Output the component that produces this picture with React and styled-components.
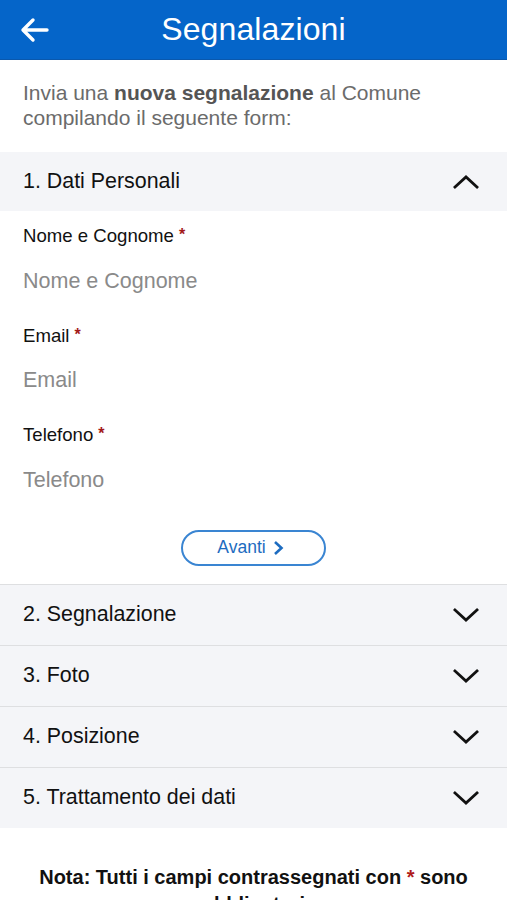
import React from 'react';
import styled, { createGlobalStyle } from 'styled-components';

const GlobalStyle = createGlobalStyle`
  html, body {
    margin: 0;
    padding: 0;
    background: #fff;
    font-family: "Liberation Sans", Arial, sans-serif;
  }
`;

const Page = styled.div`
  width: 507px;
  min-height: 900px;
  background: #fff;
  overflow: hidden;
`;

const Header = styled.header`
  height: 59px;
  background: #0565c9;
  border-bottom: 1px solid #0a58ad;
  display: flex;
  align-items: center;
  justify-content: center;
  position: relative;
`;

const BackButton = styled.button`
  position: absolute;
  left: 19px;
  top: 16px;
  width: 32px;
  height: 28px;
  padding: 0;
  border: none;
  background: none;
  display: flex;
  align-items: center;
  justify-content: center;
`;

const Title = styled.h1`
  margin: 0;
  color: #fff;
  font-size: 32px;
  font-weight: 400;
  letter-spacing: 0.1px;
`;

const Intro = styled.p`
  margin: 0;
  padding: 20px 23px 22px;
  font-size: 21px;
  line-height: 25px;
  color: #6b6b6b;

  b {
    color: #555;
  }
`;

const Section = styled.section`
  border-bottom: 1px solid #dedfe1;
  &:last-of-type {
    border-bottom: none;
  }
`;

const SectionHead = styled.div`
  height: ${p => (p.open ? 59 : 60)}px;
  background: #f4f5f8;
  display: flex;
  align-items: center;
  justify-content: space-between;
  padding: 0 28px 0 23px;
  font-size: 21.4px;
  color: #111;
`;

const Body = styled.div`
  padding: 14px 23px 18px;
`;

const Field = styled.div`
  display: flex;
  flex-direction: column;
  margin-bottom: 21.5px;
`;

const Label = styled.label`
  font-size: 18.6px;
  line-height: 22px;
  color: #111;
  margin-bottom: 11px;
`;

const Star = styled.span`
  color: #a31a1a;
  font-weight: 700;
  font-size: 16px;
  margin-left: 5px;
  position: relative;
  top: -2px;
`;

const Input = styled.input`
  height: 44px;
  border: none;
  padding: 0;
  font-family: inherit;
  font-size: 21.5px;
  color: #111;
  outline: none;
  background: transparent;

  &::placeholder {
    color: #8a8a8a;
  }
`;

const Actions = styled.div`
  display: flex;
  justify-content: center;
  padding-top: 6px;
`;

const NextButton = styled.button`
  width: 145px;
  height: 36px;
  border: 2px solid #3a85d2;
  border-radius: 18px;
  background: #fff;
  color: #1d6cc0;
  font-family: inherit;
  font-size: 17.5px;
  display: flex;
  align-items: center;
  justify-content: center;
  gap: 7px;
  padding: 0 6px 0 0;
`;

const Note = styled.p`
  margin: 0;
  padding: 36px 30px 0;
  text-align: center;
  font-size: 20px;
  font-weight: 700;
  line-height: 27px;
  color: #111;

  span {
    color: #b01c1c;
  }
`;

const Chevron = ({ up }) => (
  <svg width="26" height="16" viewBox="0 0 26 16">
    <path
      d={up ? 'M2 13 L13 3 L24 13' : 'M2 3 L13 13 L24 3'}
      fill="none"
      stroke="#111"
      strokeWidth="2.8"
      strokeLinecap="square"
    />
  </svg>
);

const fields = ['Nome e Cognome', 'Email', 'Telefono'];
const sections = ['2. Segnalazione', '3. Foto', '4. Posizione', '5. Trattamento dei dati'];

export default function App() {
  return (
    <Page>
      <GlobalStyle />
      <Header>
        <BackButton aria-label="Indietro">
          <svg width="30" height="26" viewBox="0 0 30 26">
            <path
              d="M27 13 H4 M13 3 L3 13 L13 23"
              fill="none"
              stroke="#fff"
              strokeWidth="3.4"
              strokeLinecap="round"
              strokeLinejoin="round"
            />
          </svg>
        </BackButton>
        <Title>Segnalazioni</Title>
      </Header>

      <Intro>
        Invia una <b>nuova segnalazione</b> al Comune compilando il seguente form:
      </Intro>

      <Section>
        <SectionHead open>
          1. Dati Personali
          <Chevron up />
        </SectionHead>
        <Body>
          {fields.map(f => (
            <Field key={f}>
              <Label>
                {f}
                <Star>*</Star>
              </Label>
              <Input placeholder={f} />
            </Field>
          ))}
          <Actions>
            <NextButton>
              Avanti
              <svg width="11" height="16" viewBox="0 0 11 16">
                <path d="M2 2 L8.5 8 L2 14" fill="none" stroke="#1d6cc0" strokeWidth="2.6" />
              </svg>
            </NextButton>
          </Actions>
        </Body>
      </Section>

      {sections.map(s => (
        <Section key={s}>
          <SectionHead>
            {s}
            <Chevron />
          </SectionHead>
        </Section>
      ))}

      <Note>
        Nota: Tutti i campi contrassegnati con <span>*</span> sono obbligatori
      </Note>
    </Page>
  );
}
